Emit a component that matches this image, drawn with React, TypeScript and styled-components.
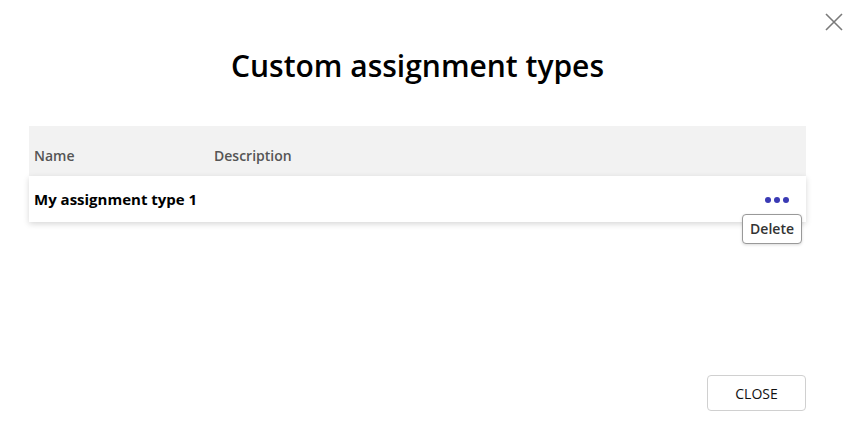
import React from "react";
import styled, { createGlobalStyle } from "styled-components";

const Global = createGlobalStyle`
  html, body { margin: 0; padding: 0; background: #fff; }
  body { font-family: "Open Sans", "Noto Sans", sans-serif; color: #000; }
`;

const Page = styled.div`
  position: relative;
  width: 861px;
  height: 443px;
  box-sizing: border-box;
  padding: 0 55px 0 29px;
  display: flex;
  flex-direction: column;
`;

const CloseIcon = styled.button`
  position: absolute;
  top: 11px;
  right: 16px;
  width: 22px;
  height: 22px;
  padding: 0;
  border: none;
  background: none;
  cursor: pointer;
  display: flex;
  align-items: center;
  justify-content: center;
`;

const Title = styled.h1`
  margin: 45px 0 0;
  font-size: 30px;
  line-height: 42px;
  font-weight: 600;
  text-align: center;
  color: #000;
`;

const Table = styled.div`
  margin-top: 39px;
  display: flex;
  flex-direction: column;
`;

const HeaderRow = styled.div`
  display: grid;
  grid-template-columns: 180px 1fr;
  height: 50px;
  align-items: end;
  padding: 0 5px 11px;
  box-sizing: border-box;
  background: #f2f2f2;
`;

const HeaderCell = styled.div`
  font-size: 14px;
  font-weight: 600;
  color: #555;
  line-height: 19px;
`;

const Row = styled.div`
  position: relative;
  display: grid;
  grid-template-columns: 1fr auto;
  align-items: center;
  height: 46px;
  padding: 0 17px 0 5px;
  background: #fff;
  box-shadow: 0 2px 6px rgba(0, 0, 0, 0.16);
`;

const NameCell = styled.div`
  font-size: 15px;
  font-weight: 700;
  color: #000;
`;

const Dots = styled.div`
  display: flex;
  gap: 3px;
  padding-top: 1px;
`;

const Dot = styled.span`
  width: 6px;
  height: 6px;
  border-radius: 50%;
  background: #3a3ab4;
`;

const Tooltip = styled.div`
  position: absolute;
  right: 4px;
  top: 38px;
  padding: 4px 7px;
  font-size: 14px;
  font-weight: 600;
  line-height: 20px;
  color: #333;
  background: #fff;
  border: 1px solid #999;
  border-radius: 4px;
  box-shadow: 0 1px 3px rgba(0, 0, 0, 0.15);
`;

const Footer = styled.div`
  margin-top: auto;
  margin-bottom: 32px;
  display: flex;
  justify-content: flex-end;
`;

const CloseButton = styled.button`
  width: 99px;
  height: 36px;
  font-family: "Open Sans", "Noto Sans", sans-serif;
  font-size: 14px;
  color: #111;
  background: #fff;
  border: 1px solid #d0d0d0;
  border-radius: 4px;
  cursor: pointer;
`;

export default function App() {
  return (
    <>
      <Global />
      <Page>
        <CloseIcon aria-label="Close">
          <svg width="20" height="20" viewBox="0 0 20 20">
            <path d="M2 2 L18 18 M18 2 L2 18" stroke="#7a7a7a" strokeWidth="1.6" fill="none" />
          </svg>
        </CloseIcon>
        <Title>Custom assignment types</Title>
        <Table>
          <HeaderRow>
            <HeaderCell>Name</HeaderCell>
            <HeaderCell>Description</HeaderCell>
          </HeaderRow>
          <Row>
            <NameCell>My assignment type 1</NameCell>
            <Dots>
              <Dot />
              <Dot />
              <Dot />
            </Dots>
            <Tooltip>Delete</Tooltip>
          </Row>
        </Table>
        <Footer>
          <CloseButton>CLOSE</CloseButton>
        </Footer>
      </Page>
    </>
  );
}
